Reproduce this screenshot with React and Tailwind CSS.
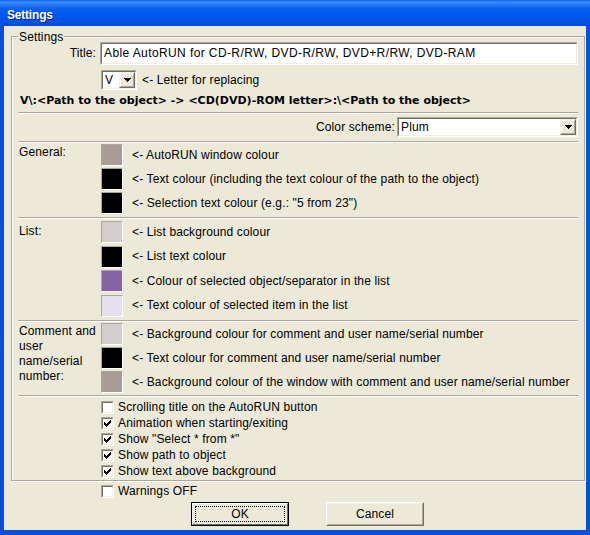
import React from "react";

const F = "font-['Liberation_Sans',Arial,sans-serif]";

function Sunken({ className = "", children }) {
  return (
    <div
      className={`border border-t-[#ACA899] border-l-[#ACA899] border-r-white border-b-white ${className}`}
    >
      <div className="h-full w-full border border-t-[#716F64] border-l-[#716F64] border-r-[#F1EFE2] border-b-[#F1EFE2] bg-white flex items-center">
        {children}
      </div>
    </div>
  );
}

function DropButton() {
  return (
    <div className="h-full w-[16px] shrink-0 border border-t-[#F1EFE2] border-l-[#F1EFE2] border-r-[#716F64] border-b-[#716F64]">
      <div className="h-full w-full border border-t-white border-l-white border-r-[#ACA899] border-b-[#ACA899] bg-[#ECE9D8] flex items-center justify-center">
        <svg width="7" height="4" viewBox="0 0 7 4" shapeRendering="crispEdges">
          <polygon points="0,0 7,0 3.5,4" fill="#000" />
        </svg>
      </div>
    </div>
  );
}

function Combo({ width, value }) {
  return (
    <Sunken className={`${width} h-full shrink-0`}>
      <span className="flex-1 pl-[2px] leading-[14px] whitespace-nowrap">{value}</span>
      <DropButton />
    </Sunken>
  );
}

function Separator({ className = "" }) {
  return <div className={`h-[2px] shrink-0 border-t border-[#ACA899] bg-white ${className}`} />;
}

function ColorRow({ bg, text, h = "h-[24px]" }) {
  return (
    <div className={`flex items-center ${h}`}>
      <div
        className={`w-[22px] h-[22px] shrink-0 border border-t-[#ACA899] border-l-[#ACA899] border-r-white border-b-white ${bg}`}
      />
      <span className="ml-[9px] whitespace-nowrap leading-[15px]">{text}</span>
    </div>
  );
}

function CheckBox({ checked }) {
  return (
    <div className="w-[13px] h-[13px] shrink-0 border border-t-[#ACA899] border-l-[#ACA899] border-r-white border-b-white">
      <div className="w-full h-full border border-t-[#716F64] border-l-[#716F64] border-r-[#F1EFE2] border-b-[#F1EFE2] bg-white flex items-center justify-center">
        {checked && (
          <svg width="7" height="7" viewBox="0 0 7 7" shapeRendering="crispEdges">
            <polygon points="0,2 2,4 7,-1 7,2 2,7 0,5" fill="#000" />
          </svg>
        )}
      </div>
    </div>
  );
}

function CheckRow({ checked, label }) {
  return (
    <div className="flex items-center h-[16px] gap-[4px]">
      <CheckBox checked={checked} />
      <span className="whitespace-nowrap leading-[15px]">{label}</span>
    </div>
  );
}

export default function App() {
  return (
    <div className={`w-[590px] h-[535px] flex flex-col bg-[#0A4FDB] ${F} text-[12px] tracking-[0.13px] text-black`}>
      {/* Title bar */}
      <div className="h-[26px] shrink-0 flex items-center pl-[7px] pt-[3px] bg-[linear-gradient(180deg,#0A5DEB_0%,#3A8CFD_8%,#2A7BF8_16%,#0A5FEE_35%,#0058EE_60%,#0054E6_85%,#0046D2_100%)]">
        <span className="font-bold text-white text-[12px] tracking-[-0.2px] leading-[14px] [text-shadow:1px_1px_0_#0A1C8F]">
          Settings
        </span>
      </div>

      {/* Client area */}
      <div className="mx-[4px] mb-[5px] flex-1 bg-[#ECE9D8] flex flex-col">
        {/* Group box */}
        <div className="relative ml-[7px] mt-[10px] w-[574px] border border-[#ACA899] shadow-[inset_1px_1px_0_#fff,1px_1px_0_#fff] px-[6px] pt-[5px] flex flex-col">
          <span className="absolute left-[6px] top-[-7px] px-[1px] bg-[#ECE9D8] leading-[15px]">
            Settings
          </span>

          {/* Title row */}
          <div className="flex items-center h-[23px]">
            <span className="w-[78px] text-right leading-[15px]">Title:</span>
            <Sunken className="ml-[4px] flex-1 h-full">
              <span className="pl-[2px] whitespace-nowrap leading-[15px] tracking-[0.4px]">
                Able AutoRUN for CD-R/RW, DVD-R/RW, DVD+R/RW, DVD-RAM
              </span>
            </Sunken>
          </div>

          {/* Letter row */}
          <div className="flex items-center h-[20px] mt-[5px] pl-[83px]">
            <Combo width="w-[36px]" value="V" />
            <span className="ml-[5px] whitespace-nowrap leading-[15px]">&lt;- Letter for replacing</span>
          </div>

          {/* Bold path row */}
          <div className="flex items-center h-[16px] mt-[3px] pl-[2px]">
            <span className="font-['DejaVu_Sans',Verdana,sans-serif] font-bold text-[11px] tracking-normal whitespace-nowrap leading-[14px]">
              V\:&lt;Path to the object&gt; -&gt; &lt;CD(DVD)-ROM letter&gt;:\&lt;Path to the object&gt;
            </span>
          </div>

          <Separator className="mt-[3px]" />

          {/* Color scheme row */}
          <div className="flex items-center justify-end h-[20px] mt-[3px]">
            <span className="mr-[2px] whitespace-nowrap leading-[15px]">Color scheme:</span>
            <Combo width="w-[181px]" value="Plum" />
          </div>

          <Separator className="mt-[4px]" />

          {/* General */}
          <div className="flex h-[74px] shrink-0">
            <div className="w-[83px] shrink-0 pl-[1px] pt-[2px] leading-[15px]">General:</div>
            <div className="flex flex-col">
              <ColorRow bg="bg-[#A99C96]" text="<- AutoRUN window colour" />
              <ColorRow bg="bg-black" text="<- Text colour (including the text colour of the path to the object)" />
              <ColorRow bg="bg-black" text={'<- Selection text colour (e.g.: "5 from 23")'} />
            </div>
          </div>

          <Separator />

          {/* List */}
          <div className="flex h-[101px] shrink-0">
            <div className="w-[83px] shrink-0 pl-[1px] pt-[5px] leading-[15px]">List:</div>
            <div className="flex flex-col pt-[1px]">
              <ColorRow h="h-[24.5px]" bg="bg-[#D5CDCB]" text="<- List background colour" />
              <ColorRow h="h-[24.5px]" bg="bg-black" text="<- List text colour" />
              <ColorRow h="h-[24.5px]" bg="bg-[#8862A6]" text="<- Colour of selected object/separator in the list" />
              <ColorRow h="h-[24.5px]" bg="bg-[#E6E0EE]" text="<- Text colour of selected item in the list" />
            </div>
          </div>

          <Separator />

          {/* Comment */}
          <div className="flex h-[73px] shrink-0">
            <div className="w-[83px] shrink-0 pl-[1px] pt-[2px] leading-[15px]">
              Comment and
              <br />
              user
              <br />
              name/serial
              <br />
              number:
            </div>
            <div className="flex flex-col">
              <ColorRow bg="bg-[#D5CDCB]" text="<- Background colour for comment and user name/serial number" />
              <ColorRow bg="bg-black" text="<- Text colour for comment and user name/serial number" />
              <ColorRow bg="bg-[#A99C96]" text="<- Background colour of the window with comment and user name/serial number" />
            </div>
          </div>

          <Separator />

          {/* Checkboxes */}
          <div className="flex flex-col pl-[83px] pt-[2px] pb-[1px]">
            <CheckRow checked={false} label="Scrolling title on the AutoRUN button" />
            <CheckRow checked label="Animation when starting/exiting" />
            <CheckRow checked label={'Show "Select * from *"'} />
            <CheckRow checked label="Show path to object" />
            <CheckRow checked label="Show text above background" />
          </div>
        </div>

        {/* Warnings */}
        <div className="mt-[2px] pl-[97px]">
          <CheckRow checked={false} label="Warnings OFF" />
        </div>

        {/* Buttons */}
        <div className="mt-[3px] pl-[187px] flex gap-[37px]">
          <div className="w-[98px] h-[24px] border border-black">
            <div className="w-full h-full border border-t-white border-l-white border-r-[#716F64] border-b-[#716F64] bg-[#ECE9D8] p-[2px]">
              <div className="w-full h-full border border-dotted border-black flex items-center justify-center leading-[15px]">
                OK
              </div>
            </div>
          </div>
          <div className="w-[98px] h-[24px] border border-t-white border-l-white border-r-[#716F64] border-b-[#716F64]">
            <div className="w-full h-full border border-t-[#F1EFE2] border-l-[#F1EFE2] border-r-[#ACA899] border-b-[#ACA899] bg-[#ECE9D8] flex items-center justify-center leading-[15px]">
              Cancel
            </div>
          </div>
        </div>
      </div>
    </div>
  );
}
